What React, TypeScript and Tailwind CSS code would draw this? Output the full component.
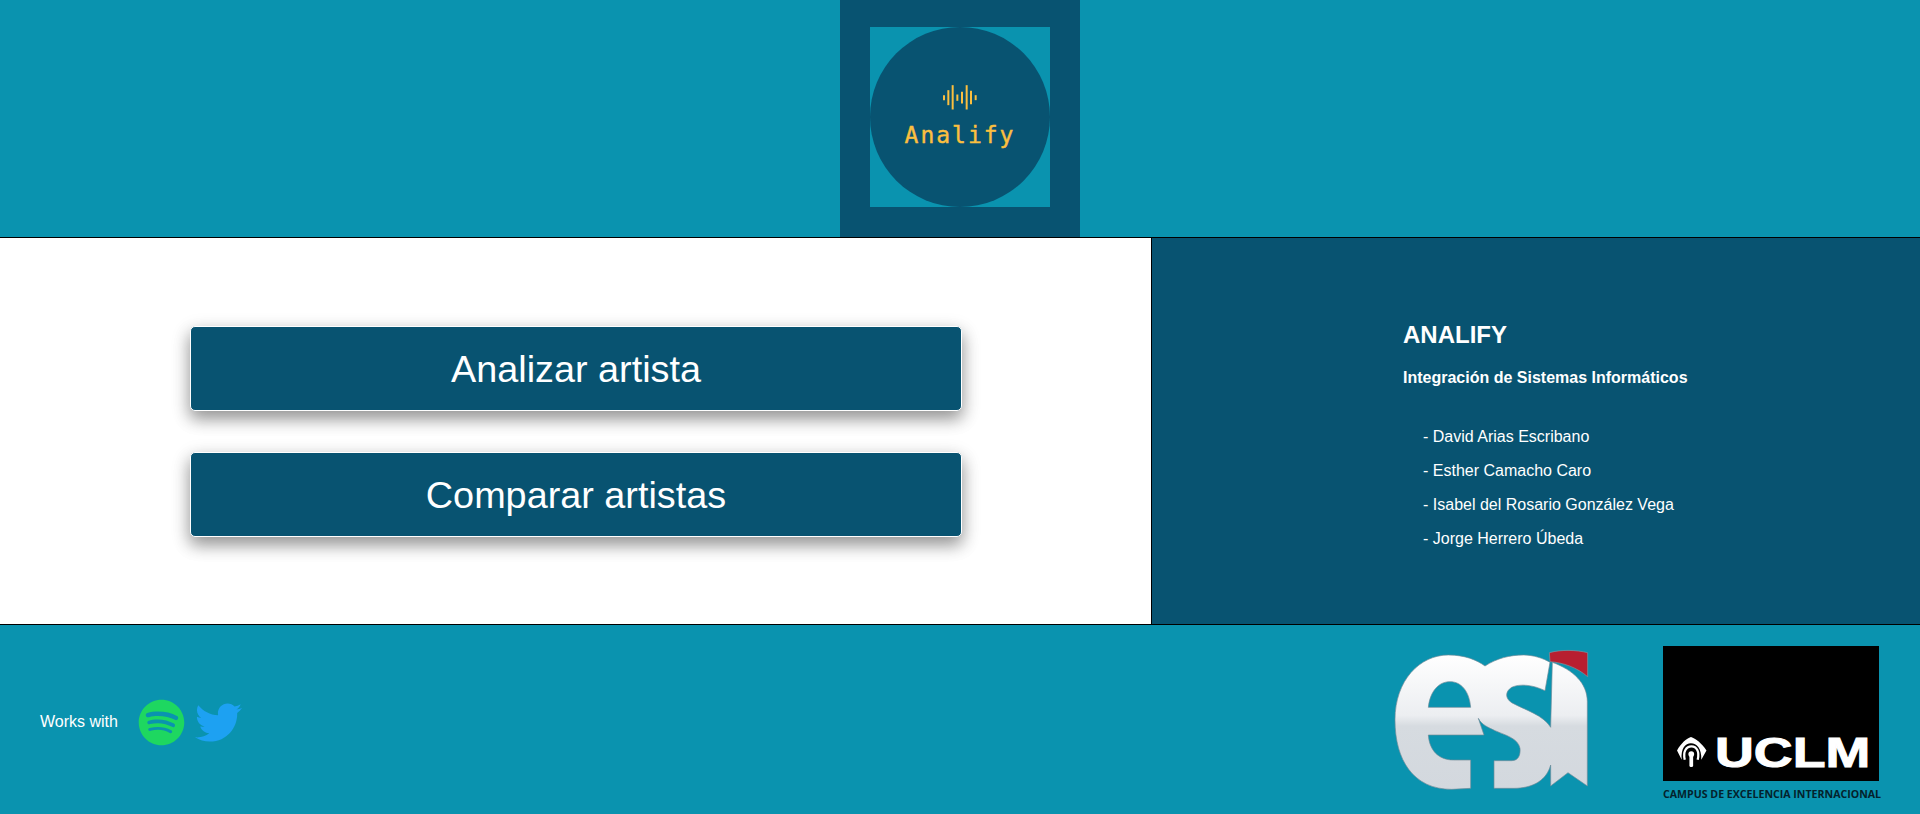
import { FaSpotify, FaTwitter } from 'react-icons/fa';

const members = [
  'David Arias Escribano',
  'Esther Camacho Caro',
  'Isabel del Rosario González Vega',
  'Jorge Herrero Úbeda',
];

const waveBars = [
  [372, 285, 300],
  [385, 270, 315],
  [398, 255, 328],
  [412, 283, 302],
  [426, 275, 310],
  [440, 255, 328],
  [453, 272, 312],
  [467, 285, 300],
];

function Logo() {
  return (
    <div className="h-full w-[240px] bg-[#085371] flex justify-center pt-[27px]">
      <div className="w-[180px] h-[180px] bg-[#0a93af]">
        <div className="w-[180px] h-[180px] rounded-full bg-[#085371] flex flex-col items-center pt-[57px]">
          <svg width="36" height="27" viewBox="366 252 108 80" stroke="#fbbf3f" strokeWidth="6">
            {waveBars.map(([x, y1, y2]) => (
              <line key={x} x1={x} x2={x} y1={y1} y2={y2} />
            ))}
          </svg>
          <span className="mt-[11px] text-[23px] leading-[26px] tracking-[2px] text-[#fbbf3f] [-webkit-text-stroke:0.4px_#fbbf3f] font-['DejaVu_Sans_Mono',monospace]">
            Analify
          </span>
        </div>
      </div>
    </div>
  );
}

function EsiLogo() {
  return (
    <svg width="270" height="184" viewBox="0 0 810 552" className="shrink-0 mt-[5px]">
      <defs>
        <linearGradient id="esi" x1="0" y1="75" x2="0" y2="478" gradientUnits="userSpaceOnUse">
          <stop offset="0" stopColor="#ffffff" />
          <stop offset="0.45" stopColor="#eceef1" />
          <stop offset="0.53" stopColor="#d6dbe0" />
          <stop offset="1" stopColor="#d3d8de" />
        </linearGradient>
      </defs>
      <path
        fill="url(#esi)"
        fillRule="evenodd"
        stroke="#6f8b99"
        strokeWidth="2"
        d="M75,270 C75,150 150,75 235,75 C285,75 320,90 345,108 C380,85 420,75 460,75 C490,75 520,85 540,97 L525,182 C490,165 450,160 425,172 C405,185 405,205 425,218 C465,240 520,255 542,292 L547,97 C610,120 652,160 652,215 L652,468 L594,428 L542,468 L542,405 C530,450 490,475 430,475 L372,475 L372,392 L425,392 C445,392 452,375 450,355 C445,325 405,315 375,302 C355,292 335,285 325,265 L342,315 L175,315 C178,360 205,390 250,390 L302,390 L302,475 L245,478 C130,478 75,390 75,270 Z M175,232 L302,232 C298,185 275,155 240,155 C205,155 180,185 175,232 Z"
      />
      <path
        fill="#b81f30"
        stroke="#7d98a5"
        strokeWidth="2"
        d="M538,68 C575,58 620,60 653,68 L653,140 C620,112 580,98 540,95 Z"
      />
    </svg>
  );
}

function UclmLogo() {
  return (
    <div className="w-[216px] flex flex-col mt-[21px]">
      <div className="h-[135px] bg-black flex items-end pl-[13px] pb-[13px] gap-[7px]">
        <svg width="32" height="32" viewBox="0 0 31 31" fill="#fff" className="shrink-0">
          <path d="M1 14 C5 7 10 2.500 14.500 1 C19 2.500 25 7 29.500 14 L24.500 23 C25 12 20 7 14.500 7 C9 7 4.500 12 5.500 23 Z" />
          <path d="M8.500 23 C6.500 15 10 10 15 10 C20 10 23 15 21 23" fill="none" stroke="#fff" strokeWidth="2.200" />
          <circle cx="14.800" cy="17.500" r="2.800" />
          <rect x="13" y="18" width="3.600" height="12" rx="1.500" />
        </svg>
        <span className="text-[42px] leading-[31px] font-bold text-white origin-left scale-x-[1.28] font-['Liberation_Sans',sans-serif] [-webkit-text-stroke:1px_white]">
          UCLM
        </span>
      </div>
      <span className="mt-[6px] text-[10.600px] leading-[14px] font-bold whitespace-nowrap text-[#04222c] font-['Open_Sans',sans-serif]">
        CAMPUS DE EXCELENCIA INTERNACIONAL
      </span>
    </div>
  );
}

function MenuButton({ label }: { label: string }) {
  return (
    <button className="w-full h-[85px] pt-[1px] bg-[#085371] text-white text-[37.800px] rounded-[5px] border border-white shadow-[0_8px_16px_0_rgba(0,0,0,0.3),0_6px_20px_0_rgba(0,0,0,0.19)]">
      {label}
    </button>
  );
}

export default function App() {
  return (
    <div className="h-[814px] w-full flex flex-col bg-[#0a93af] font-['Liberation_Sans',Arial,sans-serif] text-white overflow-hidden">
      <header className="h-[238px] flex justify-center border-b border-black">
        <Logo />
      </header>

      <main className="h-[387px] flex border-b border-black">
        <section className="w-[1152px] bg-white border-r border-black pl-[190px] pr-[189px] pt-[88px] flex flex-col gap-[41px]">
          <MenuButton label="Analizar artista" />
          <MenuButton label="Comparar artistas" />
        </section>
        <aside className="flex-1 bg-[#085371] pl-[251px] pt-[81px]">
          <h3 className="text-[24px] leading-[32px] font-bold">ANALIFY</h3>
          <p className="mt-[15px] text-[16px] leading-[24px] font-bold">Integración de Sistemas Informáticos</p>
          <ul className="mt-[35px] pl-[20px] flex flex-col gap-[10px] text-[16px] leading-[24px]">
            {members.map((name) => (
              <li key={name}>- {name}</li>
            ))}
          </ul>
        </aside>
      </main>

      <footer className="flex-1 flex items-center pl-[40px] pt-[5px]">
        <span className="text-[16px]">Works with</span>
        <FaSpotify size={47} className="ml-[20px] text-[#1ed760]" />
        <FaTwitter size={47} className="ml-[10px] text-[#1da1f2]" />
        <div className="ml-auto self-start -mt-[5px] flex items-start pr-[41px]">
          <EsiLogo />
          <div className="ml-[23px]">
            <UclmLogo />
          </div>
        </div>
      </footer>
    </div>
  );
}
